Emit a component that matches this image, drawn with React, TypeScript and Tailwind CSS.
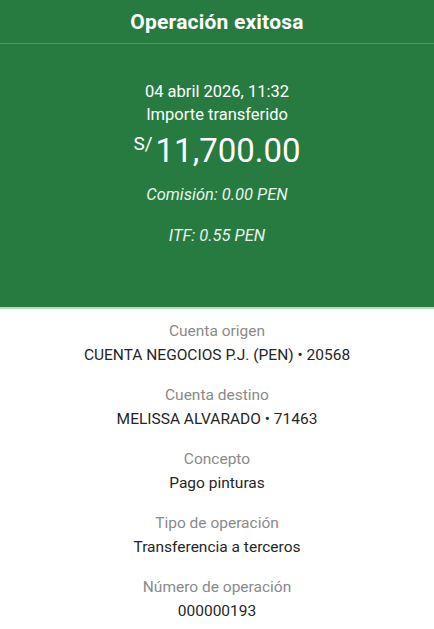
export default function App() {
  const details = [
    { label: "Cuenta origen", value: "CUENTA NEGOCIOS P.J. (PEN) • 20568" },
    { label: "Cuenta destino", value: "MELISSA ALVARADO • 71463" },
    { label: "Concepto", value: "Pago pinturas" },
    { label: "Tipo de operación", value: "Transferencia a terceros" },
    { label: "Número de operación", value: "000000193" },
  ];

  return (
    <main
      className="w-[434px] h-[629px] bg-white overflow-hidden"
      style={{ fontFamily: "Roboto, 'Liberation Sans', sans-serif" }}
    >
      <div className="bg-[#277b41]">
        <div className="h-[44px] flex items-center justify-center border-b border-[#4f9664]">
          <h1 className="text-[21px] font-bold text-white pt-[2px] tracking-[0.2px]">Operación exitosa</h1>
        </div>

        <div className="h-[263px] flex flex-col items-center pt-[36px] text-white">
          <p className="text-[16.5px] leading-[23px]">04 abril 2026, 11:32</p>
          <p className="text-[16.5px] leading-[23px]">Importe transferido</p>
          <p className="flex items-start mt-[5px]">
            <span className="text-[19px] leading-[26px] mr-[3px]">S/</span>
            <span className="text-[33px] leading-[40px]">11,700.00</span>
          </p>
          <p className="text-[16.5px] italic mt-[14px] leading-[20px] text-[#e8f2ea]">
            Comisión: 0.00 PEN
          </p>
          <p className="text-[16.5px] italic mt-[21px] leading-[20px] text-[#e8f2ea]">
            ITF: 0.55 PEN
          </p>
        </div>
      </div>
      <div className="h-[2px] bg-[#b9dcc1]" />

      <div className="flex flex-col items-center pt-[11px]">
        {details.map((item) => (
          <div key={item.label} className="flex flex-col items-center h-[64px]">
            <p className="text-[15.5px] leading-[23px] text-[#8a8a8a]">{item.label}</p>
            <p className="text-[15.5px] leading-[24px] text-[#262626]">{item.value}</p>
          </div>
        ))}
      </div>
      <div className="h-[1px] bg-[#d4d4d4] mt-[-5px]" />
    </main>
  );
}
